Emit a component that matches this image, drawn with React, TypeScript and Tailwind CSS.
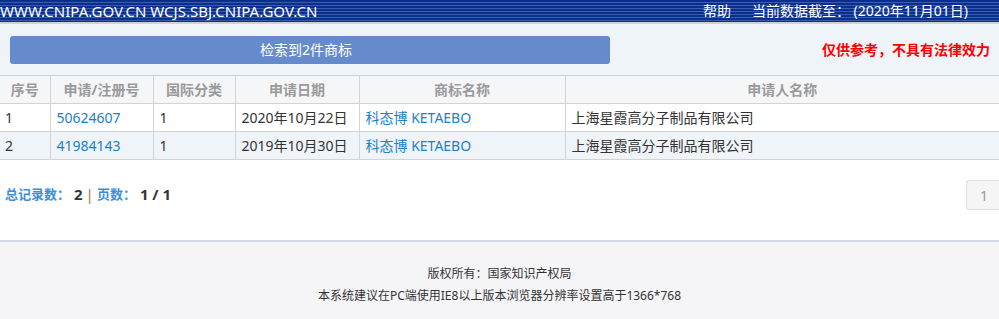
const font = "font-['Noto_Sans','Noto_Sans_CJK_SC',sans-serif]";

type Row = {
  no: string;
  regNo: string;
  cls: string;
  date: string;
  mark: string;
  applicant: string;
};

const rows: Row[] = [
  { no: '1', regNo: '50624607', cls: '1', date: '2020年10月22日', mark: '科态博 KETAEBO', applicant: '上海星霞高分子制品有限公司' },
  { no: '2', regNo: '41984143', cls: '1', date: '2019年10月30日', mark: '科态博 KETAEBO', applicant: '上海星霞高分子制品有限公司' },
];

const headers = [
  { label: '序号', w: 'w-[50px]' },
  { label: '申请/注册号', w: 'w-[103px]' },
  { label: '国际分类', w: 'w-[82px]' },
  { label: '申请日期', w: 'w-[124px]' },
  { label: '商标名称', w: 'w-[206px]' },
  { label: '申请人名称', w: '' },
];

export default function App() {
  return (
    <div className={`${font} w-[999px] h-[319px] bg-white flex flex-col text-[#333]`}>
      <div className="h-[22px] flex items-center justify-between text-white text-[15px] bg-[repeating-linear-gradient(to_bottom,#0a2e8e_0px,#0a2e8e_2px,#3d5cb0_2px,#3d5cb0_3px)]">
        <span className="leading-none">WWW.CNIPA.GOV.CN WCJS.SBJ.CNIPA.GOV.CN</span>
        <div className="flex items-center gap-[21px] pr-[31px] leading-none text-[14px]">
          <span>帮助</span>
          <span>当前数据截至：&nbsp;(2020年11月01日)</span>
        </div>
      </div>
      <div className="h-[2px] bg-[#d2d2d2]" />
      <div className="bg-[#eff4f8] h-[51px] flex items-center justify-between pl-[10px] pr-[9px]">
        <div className="w-[600px] h-[28px] rounded-[3px] bg-[#668bcd] text-white text-[14px] flex items-center justify-center pr-[8px]">
          检索到2件商标
        </div>
        <span className="text-[#ff0000] text-[14px] font-bold">仅供参考，不具有法律效力</span>
      </div>
      <table className="w-full border-collapse table-fixed text-[14px]">
        <thead>
          <tr className="h-[28px] bg-[#f5f6f8]">
            {headers.map((h) => (
              <th key={h.label} className={`${h.w} border border-[#d3d3d3] border-l-0 last:border-r-0 text-[#9a9a9a] font-bold text-center leading-none`}>
                {h.label}
              </th>
            ))}
          </tr>
        </thead>
        <tbody>
          {rows.map((r, i) => (
            <tr key={r.no} className={`h-[28px] ${i % 2 === 1 ? 'bg-[#eff4f8]' : 'bg-white'}`}>
              <td className="border border-[#d3d3d3] border-l-0 pl-[5px] leading-none">{r.no}</td>
              <td className="border border-[#d3d3d3] pl-[6px] text-[#1b82c8] leading-none">{r.regNo}</td>
              <td className="border border-[#d3d3d3] pl-[6px] leading-none">{r.cls}</td>
              <td className="border border-[#d3d3d3] pl-[6px] leading-none">{r.date}</td>
              <td className="border border-[#d3d3d3] pl-[6px] text-[#1b82c8] leading-none">{r.mark}</td>
              <td className="border border-[#d3d3d3] border-r-0 pl-[6px] leading-none">{r.applicant}</td>
            </tr>
          ))}
        </tbody>
      </table>
      <div className="h-[80px] flex items-start justify-between pl-[5px]">
        <div className="mt-[23px] text-[13px] font-bold flex items-center">
          <span className="text-[#3d8fd8]">总记录数：</span>
          <span className="text-[#333] text-[15px] ml-[4px]">2</span>
          <span className="text-[#b8732f] font-normal mx-[3px] text-[15px]">|</span>
          <span className="text-[#3d8fd8]">页数：</span>
          <span className="text-[#333] text-[15px] ml-[4px]">1 / 1</span>
        </div>
        <div className="mt-[20px] w-[33px] h-[30px] border border-[#dedede] border-r-0 rounded-l-[4px] bg-[#f5f5f5] text-[#999] text-[14px] flex items-center justify-center pl-[2px]">
          1
        </div>
      </div>
      <div className="h-[2px] bg-[#d5d8e8]" />
      <div className="flex-1 bg-[#f5f5f7] flex flex-col items-center pt-[23px] text-[12px] text-[#333] gap-[5px] leading-[17px]">
        <span>版权所有：国家知识产权局</span>
        <span>本系统建议在PC端使用IE8以上版本浏览器分辨率设置高于1366*768</span>
      </div>
    </div>
  );
}
